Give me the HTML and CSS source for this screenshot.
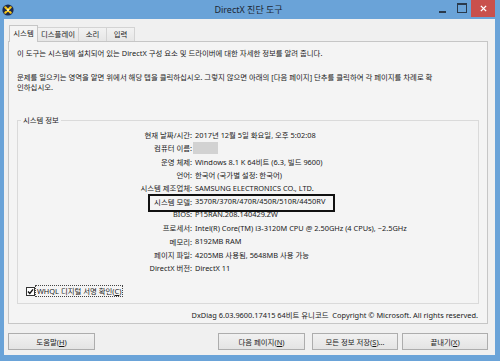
FILE: index.html
```html
<!DOCTYPE html>
<html lang="ko">
<head>
    <meta charset="UTF-8">
    <meta name="viewport" content="width=device-width, initial-scale=1.0">
    <title>DirectX 진단 도구</title>
    <link rel="stylesheet" href="styles.css">
</head>
<body>
    <div class="window">
        <div class="titlebar">
            <svg class="app-icon" viewBox="0 0 12 12" width="12" height="12">
                <circle cx="6" cy="6" r="5.6" fill="#1c2a4e"/>
                <path d="M3.3 3.3 L8.7 8.7 M8.7 3.3 L3.3 8.7" stroke="#f3c316" stroke-width="2.2" stroke-linecap="round"/>
                <circle cx="6" cy="6" r="1.2" fill="#fff3b0"/>
            </svg>
            <div class="title">DirectX 진단 도구</div>
            <div class="controls">
                <span class="ctl min"></span>
                <span class="ctl max"></span>
                <span class="ctl close">
                    <svg viewBox="0 0 8 8" width="7" height="7">
                        <path d="M1 1 L7 7 M7 1 L1 7" stroke="#fff" stroke-width="1.6"/>
                    </svg>
                </span>
            </div>
        </div>

        <div class="client">
            <div class="tabs">
                <div class="tab active">시스템</div>
                <div class="tab wide">디스플레이</div>
                <div class="tab">소리</div>
                <div class="tab">입력</div>
            </div>

            <div class="panel">
                <p class="intro">이 도구는 시스템에 설치되어 있는 DirectX 구성 요소 및 드라이버에 대한 자세한 정보를 알려 줍니다.</p>
                <p class="intro">문제를 일으키는 영역을 알면 위에서 해당 탭을 클릭하십시오. 그렇지 않으면 아래의 [다음 페이지] 단추를 클릭하여 각 페이지를 차례로 확<br>인하십시오.</p>

                <fieldset class="group">
                    <legend>시스템 정보</legend>
                    <div class="row"><span class="label">현재 날짜/시간:</span><span class="value">2017년 12월 5일 화요일, 오후 5:02:08</span></div>
                    <div class="row"><span class="label">컴퓨터 이름:</span><span class="value"><span class="blur"></span></span></div>
                    <div class="row"><span class="label">운영 체제:</span><span class="value">Windows 8.1 K 64비트 (6.3, 빌드 9600)</span></div>
                    <div class="row"><span class="label">언어:</span><span class="value">한국어 (국가별 설정: 한국어)</span></div>
                    <div class="row"><span class="label">시스템 제조업체:</span><span class="value">SAMSUNG ELECTRONICS CO., LTD.</span></div>
                    <div class="row marked"><span class="label">시스템 모델:</span><span class="value">3570R/370R/470R/450R/510R/4450RV</span></div>
                    <div class="row"><span class="label">BIOS:</span><span class="value">P15RAN.208.140429.ZW</span></div>
                    <div class="row"><span class="label">프로세서:</span><span class="value">Intel(R) Core(TM) i3-3120M CPU @ 2.50GHz (4 CPUs), ~2.5GHz</span></div>
                    <div class="row"><span class="label">메모리:</span><span class="value">8192MB RAM</span></div>
                    <div class="row"><span class="label">페이지 파일:</span><span class="value">4205MB 사용됨, 5648MB 사용 가능</span></div>
                    <div class="row"><span class="label">DirectX 버전:</span><span class="value">DirectX 11</span></div>

                    <label class="check">
                        <svg class="box" viewBox="0 0 9 9" width="9" height="9">
                            <rect x="0.5" y="0.5" width="8" height="8" fill="#fff" stroke="#333"/>
                            <path d="M2 4.5 L3.8 6.5 L7 2.3" fill="none" stroke="#111" stroke-width="1.4"/>
                        </svg>
                        <span class="check-text">WHQL 디지털 서명 확인(<u>C</u>)</span>
                    </label>
                </fieldset>

                <div class="version">DxDiag 6.03.9600.17415 64비트 유니코드&nbsp; Copyright © Microsoft. All rights reserved.</div>
            </div>

            <div class="buttons">
                <button class="btn">도움말(<u>H</u>)</button>
                <button class="btn next">다음 페이지(<u>N</u>)</button>
                <button class="btn save">모든 정보 저장(<u>S</u>)...</button>
                <button class="btn quit">끝내기(<u>X</u>)</button>
            </div>
        </div>
    </div>
</body>
</html>
```

FILE: styles.css
```css
* {
    box-sizing: border-box;
}
body {
    margin: 0;
    font-family: "Noto Sans", "Noto Sans CJK KR", sans-serif;
    font-size: 7.4px;
    color: #1a1a1a;
}

/* window frame */
.window {
    width: 500px;
    height: 361px;
    background: #6aa3d8;
    display: flex;
    flex-direction: column;
}
.titlebar {
    height: 19px;
    display: grid;
    grid-template-columns: 1fr auto 1fr;
    align-items: center;
    padding: 0 5px 0 2px;
}
.app-icon {
    display: block;
}
.title {
    font-size: 9px;
    color: #1d2733;
    margin-top: -1px;
}
.controls {
    justify-self: end;
    align-self: start;
    display: flex;
}
.ctl {
    width: 19px;
    height: 17px;
    display: flex;
    align-items: center;
    justify-content: center;
}
.ctl.min::before {
    content: "";
    width: 7px;
    height: 2px;
    margin-top: 7px;
    background: #2a3a4c;
}
.ctl.max::before {
    content: "";
    width: 8px;
    height: 7px;
    margin-top: -2px;
    border: 1px solid #2a3a4c;
    border-top-width: 2px;
}
.ctl.close {
    width: 24px;
    background: #c9504c;
}

/* dialog body */
.client {
    flex: 1;
    margin: 0 5px 6px 4px;
    background: #f0f0f0;
    padding: 6px 7px 5px 4px;
    display: flex;
    flex-direction: column;
}
.tabs {
    display: flex;
    align-items: flex-end;
    height: 16px;
    padding-left: 1px;
}
.tab {
    width: 29px;
    height: 14px;
    margin-right: -1px;
    border: 1px solid #d3d3d3;
    border-bottom: none;
    background: linear-gradient(#f2f2f2, #e6e6e6);
    text-align: center;
    line-height: 12px;
}
.tab.wide {
    width: 42px;
}
.tab.active {
    height: 17px;
    margin-bottom: -1px;
    border-color: #c6c6c6;
    background: #f4f4f4;
    line-height: 14px;
    position: relative;
    z-index: 1;
}
.panel {
    flex: 1;
    border: 1px solid #c6c6c6;
    background: #f4f4f4;
    padding: 6px 8px 3px;
    display: flex;
    flex-direction: column;
}
.intro {
    margin: 0;
    line-height: 10px;
}
.intro + .intro {
    margin-top: 15px;
    line-height: 9.5px;
}

/* system info group */
.group {
    margin: 23px 0 0;
    padding: 3px 0 6px;
    border: 1px solid #dadada;
    min-width: 0;
}
.group legend {
    padding: 0 2px;
    margin-left: 3px;
    line-height: 10px;
}
.row {
    display: flex;
    align-items: center;
    height: 13.3px;
    white-space: nowrap;
}
.label {
    width: 174px;
    text-align: right;
}
.value {
    padding-left: 3px;
}
.blur {
    display: inline-block;
    width: 25px;
    height: 12px;
    margin-left: -2px;
    vertical-align: middle;
    background: #d2d2d2;
}
.row.marked {
    position: relative;
}
.row.marked::after {
    content: "";
    position: absolute;
    left: 130px;
    top: -0.5px;
    width: 183px;
    height: 14px;
    border: 2px solid #111;
}
.check {
    display: flex;
    align-items: center;
    height: 12px;
    margin: 11px 0 0 8px;
}
.box {
    display: block;
}
.check-text {
    margin-left: 1px;
    padding: 0 1px;
    line-height: 10px;
    outline: 1px dotted #444;
}
.version {
    margin-top: auto;
    line-height: 10px;
    text-align: right;
    padding-right: 1px;
}

/* bottom buttons */
.buttons {
    display: flex;
    height: 17px;
    margin-top: 9px;
}
.btn {
    width: 87px;
    height: 17px;
    padding: 0;
    border: 1px solid #adadad;
    background: linear-gradient(#f1f1f1, #e4e4e4);
    font: inherit;
    color: #1a1a1a;
}
.btn.next {
    margin-left: auto;
}
.btn.save {
    width: 86px;
    margin-left: 7px;
}
.btn.quit {
    width: 86px;
    margin-left: 4px;
}
```
